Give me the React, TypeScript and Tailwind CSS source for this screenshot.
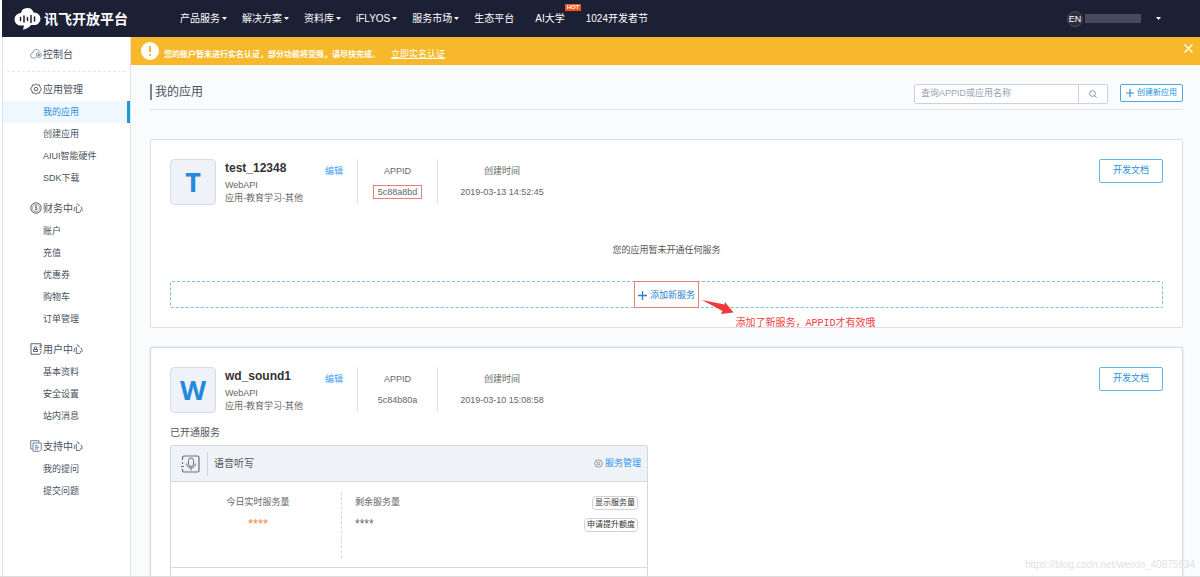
import type { ReactNode } from 'react';

type NavItem = { label: string; menu?: boolean; hot?: boolean };

const NAV: NavItem[] = [
	{ label: '产品服务', menu: true },
	{ label: '解决方案', menu: true },
	{ label: '资料库', menu: true },
	{ label: 'iFLYOS', menu: true },
	{ label: '服务市场', menu: true },
	{ label: '生态平台' },
	{ label: 'AI大学', hot: true },
	{ label: '1024开发者节' },
];

function Logo() {
	return (
		<svg className="h-[22px] w-[27px]" viewBox="0 0 27 22" fill="none">
			<path
				d="M7 5A6.500 6.500 0 0 1 19.500 4.500A6.300 6.300 0 0 1 26.500 10.500A6.300 6.300 0 0 1 20 17H17C15 19.500 12.500 21 9 21.800L10 17.500H7A6.300 6.300 0 0 1 .5 11A6.300 6.300 0 0 1 7 5Z"
				fill="#fff"
			/>
			<path
				d="M6.500 9.500v3M10 8v6M13.500 9.500v3M17 7.500v7M20.500 9v4"
				stroke="#1b2035"
				strokeWidth="1.5"
				strokeLinecap="round"
			/>
		</svg>
	);
}

function Caret() {
	return (
		<svg className="h-[3px] w-[5px]" viewBox="0 0 5 3" fill="currentColor">
			<path d="M0 0h5L2.500 3z" />
		</svg>
	);
}

function LineIcon({
	children,
	className = 'size-3',
}: {
	children: ReactNode;
	className?: string;
}) {
	return (
		<svg
			className={className}
			viewBox="0 0 24 24"
			fill="none"
			stroke="currentColor"
			strokeWidth="1.8"
			strokeLinejoin="round"
		>
			{children}
		</svg>
	);
}

function CloudIcon() {
	return (
		<LineIcon className="size-3 text-[#7f8da3]">
			<path d="M12 20H6a5 5 0 0 1-.8-9.900A7.500 7.500 0 0 1 19 6.500" />
			<circle cx="17.500" cy="14" r="5" />
			<circle cx="17.500" cy="14" r="2" fill="currentColor" />
		</LineIcon>
	);
}

function GearIcon({ className }: { className?: string }) {
	return (
		<LineIcon className={className}>
			<path d="M12 1.500 15 4l4-.2L20 8l3 4-3 4-1 4.200-4-.2-3 2.500L9 20l-4 .2L4 16l-3-4 3-4 1-4.200L9 4z" />
			<circle cx="12" cy="12" r="3.500" />
		</LineIcon>
	);
}

function CoinIcon() {
	return (
		<LineIcon>
			<circle cx="12" cy="12" r="10.500" />
			<circle cx="12" cy="12" r="7.500" strokeWidth="1" />
			<path d="M14 9c-2-1.500-4.500-.8-4 1s4.500 1.500 4.500 3.500-3 2.300-5 .8M12 7v10" strokeWidth="1.300" />
		</LineIcon>
	);
}

function UserIcon() {
	return (
		<LineIcon>
			<path d="M22 8V1.500H2v21h17.500L22 19v-3M19 5h4M19 9h4M19 13h4" />
			<circle cx="11" cy="10" r="2.500" />
			<path d="M7 17v-4h8v4z" />
		</LineIcon>
	);
}

function DocsIcon() {
	return (
		<LineIcon className="size-3 text-[#5f7390]">
			<path d="M5 18H1.500V1.500H18V5" />
			<path d="M6 6h16.500v13L19 22.500H6zM10 11h5M10 14.500h8M10 18h6" />
		</LineIcon>
	);
}

function MicIcon() {
	return (
		<svg
			className="h-[18px] w-[19px] text-[#6b6f76]"
			viewBox="0 0 19 18"
			fill="none"
			stroke="currentColor"
			strokeWidth="1.2"
		>
			<path d="M1.500 5V2.500A1.500 1.500 0 0 1 3 1h13.500A1.500 1.500 0 0 1 18 2.500v13a1.500 1.500 0 0 1-1.500 1.500H3A1.500 1.500 0 0 1 1.500 15.500V14M0 11.500h3M1.500 7v2" />
			<rect x="7.500" y="3" width="5" height="8.500" rx="2.500" strokeWidth="1" />
			<path d="M5.500 8.500a4.500 4.500 0 0 0 9 0M10 13v2.500" strokeWidth="1" />
		</svg>
	);
}

function PlusIcon({ className }: { className?: string }) {
	return (
		<svg className={className} viewBox="0 0 9 9" stroke="currentColor" strokeWidth="1.3">
			<path d="M4.500 0v9M0 4.500h9" />
		</svg>
	);
}

const GROUPS = [
	{
		title: '应用管理',
		icon: <GearIcon className="size-3" />,
		items: ['我的应用', '创建应用', 'AIUI智能硬件', 'SDK下载'],
	},
	{
		title: '财务中心',
		icon: <CoinIcon />,
		items: ['账户', '充值', '优惠券', '购物车', '订单管理'],
	},
	{
		title: '用户中心',
		icon: <UserIcon />,
		items: ['基本资料', '安全设置', '站内消息'],
	},
	{
		title: '支持中心',
		icon: <DocsIcon />,
		items: ['我的提问', '提交问题'],
	},
];

function Header() {
	return (
		<header className="flex h-[37px] shrink-0 items-center bg-[#1b2035] pl-3 text-[10px] text-white">
			<a href="#" className="flex items-center gap-[3px]">
				<Logo />
				<span className="text-[14px] leading-5 font-bold whitespace-nowrap">讯飞开放平台</span>
			</a>
			<nav className="ml-[52px] flex items-center gap-[15px] whitespace-nowrap">
				{NAV.map(({ label, menu, hot }) => (
					<a
						key={label}
						href="#"
						className={
							menu
								? 'flex items-center gap-[2px] leading-4'
								: 'relative mr-[6px] flex items-center leading-4'
						}
					>
						{label}
						{menu && <Caret />}
						{hot && (
							<span className="absolute -top-[7px] left-full bg-[#f4511e] px-[2px] text-[6px] leading-[7px] font-bold">
								HOT
							</span>
						)}
					</a>
				))}
			</nav>
			<div className="mr-[39px] ml-auto flex items-center">
				<button className="size-4 rounded-full border border-[#4b4e58] bg-[#2b2e3a] text-[9px] leading-3">
					EN
				</button>
				<span className="ml-[2px] h-[9px] w-14 bg-[#474a5b]" />
				<span className="ml-[15px]">
					<Caret />
				</span>
			</div>
		</header>
	);
}

function Sidebar() {
	return (
		<aside className="w-[129px] shrink-0 border-x border-[#dfe1e5] bg-white text-[#4a5160]">
			<a
				href="#"
				className="mx-1 flex h-[35px] items-center gap-px border-b border-dashed border-[#e4e6ea] pl-[23px] text-[10px]"
			>
				<CloudIcon />
				控制台
			</a>
			<div className="flex flex-col gap-[7px] pt-[5px]">
				{GROUPS.map(({ title, icon, items }) => (
					<section key={title}>
						<h2 className="flex h-6 items-center gap-px pl-[27px] text-[10px]">
							{icon}
							{title}
						</h2>
						<ul className="text-[9px] leading-[22px]">
							{items.map((item) => (
								<li key={item}>
									<a
										href="#"
										className={
											item === '我的应用'
												? 'block border-r-[3px] border-[#1e96dc] bg-[#eef8fe] pl-10 text-[#2a8ce0]'
												: 'block pl-10'
										}
									>
										{item}
									</a>
								</li>
							))}
						</ul>
					</section>
				))}
			</div>
		</aside>
	);
}

function Notice() {
	return (
		<div className="flex h-7 items-center bg-[#f7b92b] pr-[7px] pl-[10px] text-white">
			<svg className="size-[18px]" viewBox="0 0 18 18">
				<circle cx="9" cy="9" r="9" fill="#fff" />
				<path d="M9 4v6M9 12v2" stroke="#f7b92b" strokeWidth="2" />
			</svg>
			<p className="ml-[5px] pt-[6px] text-[8px] leading-4">
				<b>您的账户暂未进行实名认证，部分功能将受限，请尽快完成。</b>
				<a href="#" className="ml-[11px] text-[9px] underline">
					立即实名认证
				</a>
			</p>
			<button aria-label="关闭" className="mb-[6px] ml-auto">
				<svg className="size-[9px]" viewBox="0 0 9 9" stroke="#fff" strokeWidth="1.3">
					<path d="M.5.5l8 8M8.500.5l-8 8" />
				</svg>
			</button>
		</div>
	);
}

function Toolbar() {
	return (
		<div className="flex h-[45px] items-start border-b border-[#e0e3e8] pt-[19px]">
			<h1 className="border-l-2 border-[#7a8499] pl-[3px] text-[12px] leading-4 text-[#4a5160]">
				我的应用
			</h1>
			<form className="ml-auto flex h-5 rounded-xs border border-[#cdd1dc] bg-white">
				<input
					type="text"
					aria-label="查询APPID或应用名称"
					placeholder="查询APPID或应用名称"
					className="w-[163px] px-[6px] text-[9px] outline-none placeholder:text-[#9aa1b5]"
				/>
				<button
					type="button"
					aria-label="搜索"
					className="flex w-[29px] items-center justify-center border-l border-[#cdd1dc] text-[#8a93a8]"
				>
					<svg className="size-2" viewBox="0 0 8 8" fill="none" stroke="currentColor">
						<circle cx="3.500" cy="3.500" r="2.900" />
						<path d="M5.600 5.600 7.700 7.700" />
					</svg>
				</button>
			</form>
			<button className="ml-3 flex h-[18px] items-center gap-[3px] rounded-xs border border-[#4aa8e6] bg-white px-[5px] text-[8px] text-[#2191de]">
				<PlusIcon className="size-2" />
				创建新应用
			</button>
		</div>
	);
}

type AppInfo = { name: string; appId: string; created: string; marked?: boolean };

function AppSummary({ name, appId, created, marked }: AppInfo) {
	return (
		<div className="flex items-start text-[9px] text-[#666]">
			<div className="flex size-[46px] items-center justify-center rounded-sm border border-[#d9dce2] bg-[#eff3f9] font-['Open_Sans',sans-serif] text-[27px] font-bold text-[#2389dc]">
				{name[0].toUpperCase()}
			</div>
			<div className="ml-[9px] w-[100px] leading-[13px]">
				<h3 className="mb-[2px] text-[12px] leading-[18px] font-bold text-[#333]">{name}</h3>
				<p>WebAPI</p>
				<p>应用-教育学习-其他</p>
			</div>
			<a href="#" className="w-8 pt-1 leading-4 text-[#3d9cf5]">
				编辑
			</a>
			<dl className="flex h-[45px] w-[81px] flex-col items-center border-x border-[#e1e3e6] pt-1">
				<dt className="leading-4">APPID</dt>
				<dd
					className={
						marked
							? 'mt-[6px] border border-[#ef7b7b] px-1 leading-3'
							: 'mt-[6px] border border-transparent px-1 leading-3'
					}
				>
					{appId}
				</dd>
			</dl>
			<dl className="flex w-32 flex-col items-center pt-1">
				<dt className="leading-4">创建时间</dt>
				<dd className="mt-[7px] leading-3">{created}</dd>
			</dl>
			<button className="ml-auto h-6 rounded-xs border border-[#5fb4ea] bg-white px-[13px] text-[#2a91dc]">
				开发文档
			</button>
		</div>
	);
}

function AddService() {
	return (
		<div className="relative mt-[24px] flex h-[27px] justify-center rounded-xs border border-dashed border-[#7fb9e6]">
			<button className="-my-px flex items-center gap-[3px] border border-[#e88080] px-[3px] pt-[2px] text-[9px] text-[#2a7fd0]">
				<PlusIcon className="size-[9px]" />
				添加新服务
			</button>
			<div className="absolute top-[17px] left-1/2 ml-[35px] flex text-[#f04040]">
				<svg className="h-[16px] w-[32px]" viewBox="0 0 32 16" fill="#f03a3a">
					<path d="M0 1 22.500 5.500 23 3l8.500 10.500L19 15l1.500-3z" />
				</svg>
				<p className="mt-[17px] ml-[2px] font-['Liberation_Mono','Noto_Sans_CJK_SC',monospace] text-[10px] leading-4 whitespace-nowrap">
					添加了新服务，APPID才有效哦
				</p>
			</div>
		</div>
	);
}

function ServicePanel() {
	return (
		<div className="w-[478px] rounded-t-xs border border-[#d5d9df] text-[9px] text-[#666]">
			<div className="flex h-9 items-center border-b border-[#d5d9df] bg-[#eff3f8] pr-[6px] pl-[10px]">
				<MicIcon />
				<h4 className="ml-[7px] border-l border-[#cfd3da] pl-[6px] text-[10px] leading-6 text-[#555]">
					语音听写
				</h4>
				<a href="#" className="ml-auto flex items-center gap-[2px] text-[#2f96f3]">
					<GearIcon className="size-[9px] text-[#666]" />
					服务管理
				</a>
			</div>
			<div className="flex h-[86px] border-b border-[#d5d9df] pt-[10px] pr-[9px]">
				<dl className="h-[66px] w-[171px] border-r border-dashed border-[#d5d9df] pt-[2px] pl-1 text-center leading-4">
					<dt>今日实时服务量</dt>
					<dd className="mt-[6px] text-[13px] text-[#f0883c]">****</dd>
				</dl>
				<dl className="pt-[2px] pl-[13px] leading-4">
					<dt>剩余服务量</dt>
					<dd className="mt-[6px] text-[12px]">****</dd>
				</dl>
				<div className="ml-auto flex flex-col items-end gap-2 pt-1 text-[8px] text-[#333]">
					<button className="rounded-sm border border-[#cdd1da] px-[2px] leading-3">显示服务量</button>
					<button className="rounded-sm border border-[#cdd1da] px-[2px] leading-3">申请提升额度</button>
				</div>
			</div>
			<div className="h-9" />
		</div>
	);
}

export default function App() {
	return (
		<div className="relative flex h-screen flex-col overflow-hidden border-b border-[#dcdcdc] bg-white pl-[2px] font-['Liberation_Sans','Noto_Sans_CJK_SC',sans-serif]">
			<Header />
			<div className="flex min-h-0 flex-1">
				<Sidebar />
				<main className="min-w-0 flex-1 overflow-hidden bg-[#fafbfd]">
					<Notice />
					<div className="pr-[17px] pl-[19px]">
						<Toolbar />
						<div className="flex flex-col gap-[19px] pt-[29px]">
							<article className="rounded-xs border border-[#dcdfe3] bg-white p-[19px]">
								<AppSummary name="test_12348" appId="5c88a8bd" created="2019-03-13 14:52:45" marked />
								<p className="mt-[38px] text-center text-[9px] leading-[14px] text-[#555]">
									您的应用暂未开通任何服务
								</p>
								<AddService />
							</article>
							<article className="rounded-xs border border-[#d6d9dd] bg-white p-[19px] shadow-[0_0_2px_#cfd2d6]">
								<AppSummary name="wd_sound1" appId="5c84b80a" created="2019-03-10 15:08:58" />
								<h3 className="mt-3 mb-1 text-[10px] leading-4 text-[#555]">已开通服务</h3>
								<ServicePanel />
							</article>
						</div>
					</div>
				</main>
			</div>
			<span className="absolute right-[5px] bottom-1 text-[10px] leading-[14px] text-[#e0e2e5]">
				https://blog.csdn.net/weixin_40875934
			</span>
		</div>
	);
}
